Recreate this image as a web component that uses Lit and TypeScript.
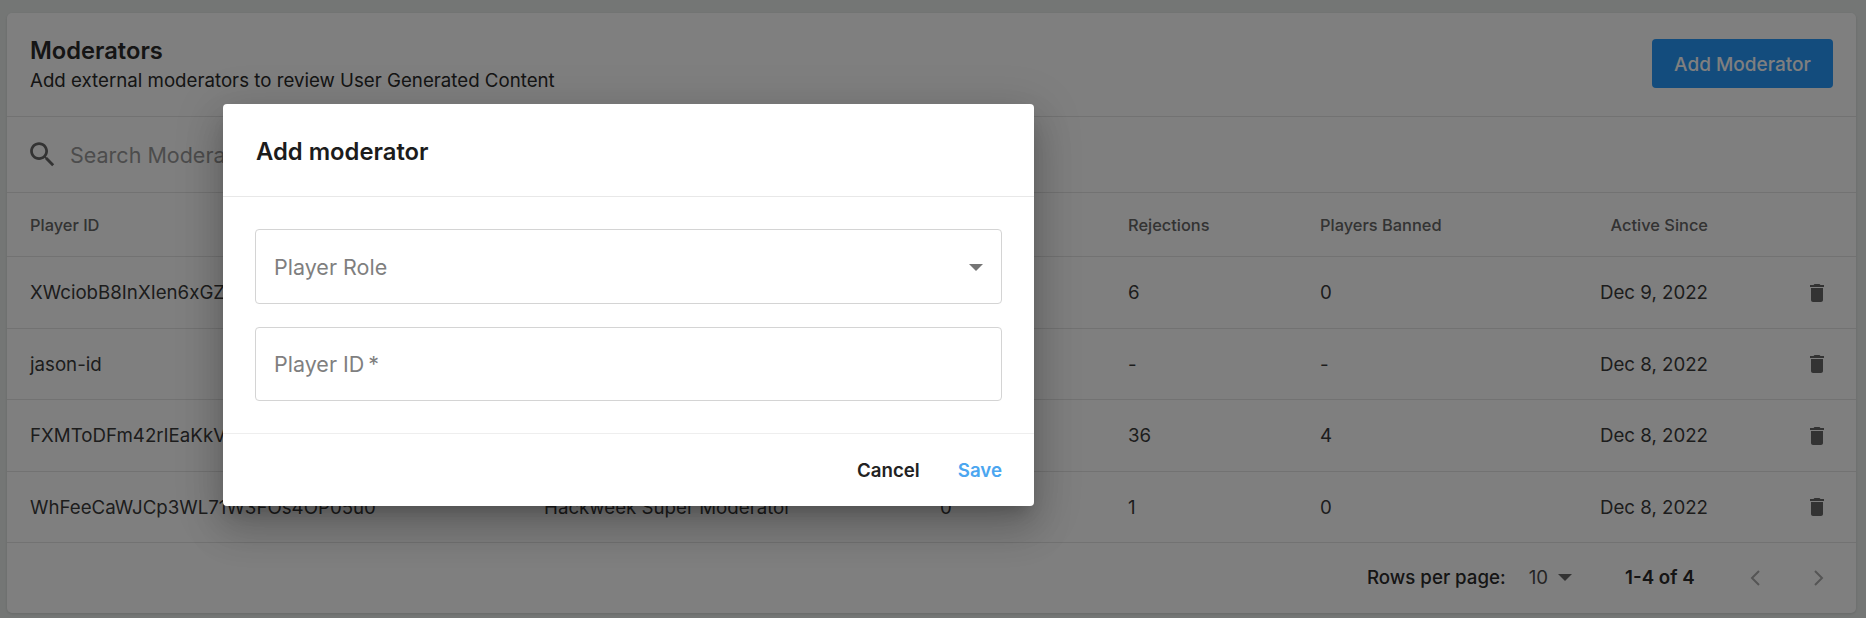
import { LitElement, html, css, svg } from 'lit';
import { customElement } from 'lit/decorators.js';

const rows = [
  { id: 'XWciobB8InXIen6xGZ3TpQ9sLk7u', role: 'Hackweek Super Moderator', approvals: '12', rejections: '6', banned: '0', since: 'Dec 9, 2022' },
  { id: 'jason-id', role: 'Hackweek Super Moderator', approvals: '-', rejections: '-', banned: '-', since: 'Dec 8, 2022' },
  { id: 'FXMToDFm42rIEaKkVb7Yd1NqZs3e', role: 'Hackweek Super Moderator', approvals: '48', rejections: '36', banned: '4', since: 'Dec 8, 2022' },
  { id: 'WhFeeCaWJCp3WL71W3FOs4OP05u0', role: 'Hackweek Super Moderator', approvals: '0', rejections: '1', banned: '0', since: 'Dec 8, 2022' },
];

const trash = svg`<path d="M6 19c0 1.1.9 2 2 2h8c1.1 0 2-.9 2-2V7H6v12zM19 4h-3.5l-1-1h-5l-1 1H5v2h14V4z"/>`;
const search = svg`<path d="M15.5 14h-.79l-.28-.27C15.41 12.59 16 11.11 16 9.5 16 5.91 13.09 3 9.5 3S3 5.91 3 9.5 5.91 16 9.5 16c1.61 0 3.09-.59 4.23-1.57l.27.28v.79l5 4.99L20.49 19l-4.99-5zm-6 0C7.01 14 5 11.99 5 9.5S7.01 5 9.5 5 14 7.01 14 9.5 11.99 14 9.5 14z"/>`;

@customElement('app-root')
export class AppRoot extends LitElement {
  static styles = css`
    :host {
      display: block;
      position: relative;
      height: 618px;
      overflow: hidden;
      background: #e9edeb;
      font-family: Inter, 'Liberation Sans', sans-serif;
      color: #3a3a3a;
    }

    .page {
      padding: 13px 10px 5px 7px;
    }

    .card {
      height: 600px;
      box-sizing: border-box;
      background: #fff;
      border-radius: 5px;
      box-shadow: 0 1px 3px rgba(0, 0, 0, 0.12);
    }

    .card-head {
      height: 103.5px;
      box-sizing: border-box;
      border-bottom: 1px solid #e4e4e4;
      padding: 0 23px;
      display: flex;
      align-items: center;
      justify-content: space-between;
    }

    .title {
      font-size: 23.7px;
      line-height: 29px;
      font-weight: 600;
      color: #2a2a2a;
      padding-bottom: 5px;
    }

    .subtitle {
      font-size: 18.7px;
      line-height: 22px;
      color: #2a2a2a;
    }

    .add {
      width: 181px;
      height: 49px;
      margin-top: -1px;
      border: none;
      border-radius: 4px;
      background: #2698fa;
      color: #fff;
      font: 500 19px Inter, sans-serif;
      padding: 2px 0 0;
    }

    .search {
      height: 76.5px;
      box-sizing: border-box;
      border-bottom: 1px solid #e4e4e4;
      padding: 2px 0 0 19px;
      display: flex;
      align-items: center;
      gap: 11px;
      font-size: 21.5px;
      color: #999;
    }

    .search svg {
      width: 33px;
      height: 33px;
      fill: #666;
      margin-top: -2px;
    }

    .tr {
      display: grid;
      grid-template-columns: 514px 396px 188px 192px 220px 168px 1fr;
      align-items: center;
      padding: 1px 0 0 23px;
      box-sizing: border-box;
      height: 71.5px;
      border-bottom: 1px solid #e4e4e4;
      font-size: 18.7px;
      white-space: nowrap;
    }

    .tr:last-of-type {
      height: 69.5px;
      padding-top: 0;
    }

    .tr.head {
      height: 64px;
      padding-top: 0;
      font-size: 16.4px;
      font-weight: 500;
      color: #666;
    }

    .right {
      text-align: right;
    }

    .del {
      display: flex;
      justify-content: flex-end;
      padding-right: 27px;
    }

    .del svg {
      width: 24px;
      height: 24px;
      fill: #666;
    }

    .pager {
      height: 71px;
      padding-bottom: 2px;
      box-sizing: border-box;
      display: flex;
      align-items: center;
      font-size: 18.7px;
    }

    .rows-label {
      margin-left: 1360px;
      font-weight: 500;
      color: #2a2a2a;
    }

    .rows-value {
      margin-left: 23px;
      margin-top: -1px;
      color: #4a4a4a;
    }

    .caret {
      margin-left: 10px;
      width: 14px;
      height: 7px;
      fill: #666;
    }

    .range {
      margin-left: 53px;
      font-weight: 600;
      color: #2a2a2a;
    }

    .chev {
      width: 10px;
      height: 16px;
      fill: none;
      stroke: #aaa;
      stroke-width: 2;
    }

    .chev.prev {
      margin-left: 55px;
    }

    .chev.next {
      margin-left: 54px;
    }

    .scrim {
      position: absolute;
      inset: 0;
      background: rgba(0, 0, 0, 0.5);
    }

    .modal {
      position: absolute;
      left: 223px;
      top: 104px;
      width: 811px;
      height: 401.5px;
      background: #fff;
      border-radius: 4px;
      box-shadow: 0 11px 15px -7px rgba(0, 0, 0, 0.2),
        0 24px 38px 3px rgba(0, 0, 0, 0.14), 0 9px 46px 8px rgba(0, 0, 0, 0.12);
    }

    .modal-head {
      height: 93px;
      box-sizing: border-box;
      border-bottom: 1px solid #e8e8e8;
      padding: 2px 33px 0;
      display: flex;
      align-items: center;
      font-size: 23.8px;
      font-weight: 600;
      color: #1c1c1c;
    }

    .modal-body {
      height: 237px;
      box-sizing: border-box;
      border-bottom: 1px solid #eee;
      padding: 32px 32px 0;
      display: flex;
      flex-direction: column;
      gap: 23px;
    }

    .field {
      height: 75px;
      box-sizing: border-box;
      border: 1px solid #d4d4d4;
      border-radius: 4px;
      padding: 1px 19px 0 18px;
      display: flex;
      align-items: center;
      justify-content: space-between;
      font-size: 21.5px;
      color: #7f7f7f;
    }

    .field + .field {
      height: 74px;
      padding-top: 0;
    }

    .field svg {
      width: 14px;
      height: 7px;
      fill: #757575;
      margin-right: -1px;
    }

    .modal-foot {
      height: 71px;
      padding: 2px 32px 0 0;
      box-sizing: border-box;
      display: flex;
      align-items: center;
      justify-content: flex-end;
      gap: 38px;
      font-size: 18.7px;
      font-weight: 600;
      color: #222;
    }

    .save {
      color: #4ba6f0;
    }
  `;

  render() {
    return html`
      <div class="page">
        <div class="card">
          <div class="card-head">
            <div>
              <div class="title">Moderators</div>
              <div class="subtitle">Add external moderators to review User Generated Content</div>
            </div>
            <button class="add">Add Moderator</button>
          </div>
          <div class="search">
            <svg viewBox="0 0 24 24">${search}</svg>
            <span>Search Moderators</span>
          </div>
          <div class="tr head">
            <span>Player ID</span>
            <span>Role</span>
            <span>Approvals</span>
            <span>Rejections</span>
            <span>Players Banned</span>
            <span class="right">Active Since</span>
            <span></span>
          </div>
          ${rows.map(
            (r) => html`
              <div class="tr">
                <span>${r.id}</span>
                <span>${r.role}</span>
                <span>${r.approvals}</span>
                <span>${r.rejections}</span>
                <span>${r.banned}</span>
                <span class="right">${r.since}</span>
                <span class="del"><svg viewBox="0 0 24 24">${trash}</svg></span>
              </div>
            `
          )}
          <div class="pager">
            <span class="rows-label">Rows per page:</span>
            <span class="rows-value">10</span>
            <svg class="caret" viewBox="0 0 14 7"><path d="M0 0h14L7 7z" /></svg>
            <span class="range">1-4 of 4</span>
            <svg class="chev prev" viewBox="0 0 10 16"><path d="M9 1 2 8l7 7" /></svg>
            <svg class="chev next" viewBox="0 0 10 16"><path d="M1 1l7 7-7 7" /></svg>
          </div>
        </div>
      </div>
      <div class="scrim"></div>
      <div class="modal">
        <div class="modal-head">Add moderator</div>
        <div class="modal-body">
          <div class="field">
            <span>Player Role</span>
            <svg viewBox="0 0 14 7"><path d="M0 0h14L7 7z" /></svg>
          </div>
          <div class="field"><span>Player ID&thinsp;*</span></div>
        </div>
        <div class="modal-foot">
          <span>Cancel</span>
          <span class="save">Save</span>
        </div>
      </div>
    `;
  }
}
